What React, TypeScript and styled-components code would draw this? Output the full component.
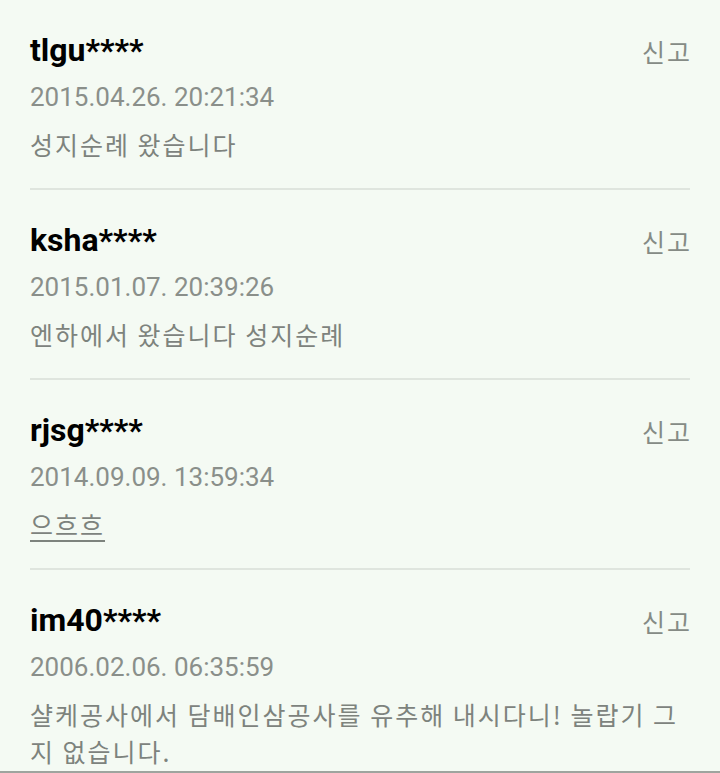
import styled, { createGlobalStyle } from 'styled-components'

const GlobalStyle = createGlobalStyle`
    html, body {
        margin: 0;
        padding: 0;
        background: #f4faf3;
    }
`

const Page = styled.div`
    height: 773px;
    box-sizing: border-box;
    overflow: hidden;
    background: #f4faf3;
    border-bottom: 2px solid #9ea49e;
    font-family: Roboto, 'Noto Sans CJK KR', sans-serif;
`

const List = styled.ul`
    list-style: none;
    margin: 0 30px;
    padding: 0;
`

const Item = styled.li`
    padding: 32px 0 25px;
    border-bottom: 2px solid #dfe5de;
`

const Top = styled.div`
    display: flex;
    justify-content: space-between;
    align-items: flex-start;
`

const Username = styled.div`
    font-size: 32px;
    line-height: 36px;
    font-weight: 700;
    color: #000;
`

const Report = styled.button`
    border: none;
    background: none;
    padding: 0;
    margin-top: 2px;
    font-family: 'Noto Sans CJK KR', sans-serif;
    font-size: 25px;
    line-height: 34px;
    letter-spacing: 2px;
    margin-right: -2px;
    color: #858b85;
    cursor: pointer;
`

const DateText = styled.div`
    margin-top: 12px;
    font-size: 26px;
    line-height: 34px;
    color: #8a8f8a;
`

const Content = styled.div<{ $link?: boolean }>`
    margin-top: 12px;
    font-family: 'Noto Sans CJK KR', sans-serif;
    font-size: 25px;
    line-height: 37px;
    letter-spacing: 2px;
    color: #7d837d;
    word-break: break-all;
    text-decoration: ${(p) => (p.$link ? 'underline' : 'none')};
    text-underline-offset: 5px;
`

type Comment = {
    user: string
    date: string
    text: string
    link?: boolean
}

const comments: Comment[] = [
    { user: 'tlgu****', date: '2015.04.26. 20:21:34', text: '성지순례 왔습니다' },
    { user: 'ksha****', date: '2015.01.07. 20:39:26', text: '엔하에서 왔습니다 성지순례' },
    { user: 'rjsg****', date: '2014.09.09. 13:59:34', text: '으흐흐', link: true },
    {
        user: 'im40****',
        date: '2006.02.06. 06:35:59',
        text: '샬케공사에서 담배인삼공사를 유추해 내시다니! 놀랍기 그지 없습니다.',
    },
]

const App = () => {
    return (
        <>
            <GlobalStyle />
            <Page>
                <List>
                    {comments.map((c) => (
                        <Item key={c.user}>
                            <Top>
                                <Username>{c.user}</Username>
                                <Report>신고</Report>
                            </Top>
                            <DateText>{c.date}</DateText>
                            <Content $link={c.link}>{c.text}</Content>
                        </Item>
                    ))}
                </List>
            </Page>
        </>
    )
}

export default App
